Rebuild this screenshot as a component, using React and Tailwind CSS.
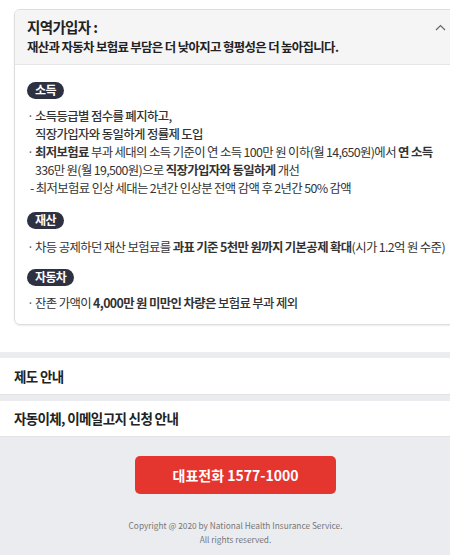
const font = { fontFamily: '"Noto Sans CJK KR", "Noto Sans", sans-serif' };

const Badge = ({ children }) => (
  <span className="inline-flex h-[17px] items-center rounded-full bg-[#2e3142] px-[8px] text-[12px] font-bold leading-none text-white">
    {children}
  </span>
);

const Bullet = ({ children, nowrap }) => (
  <div className="flex">
    <span className="w-[8px] shrink-0 text-[#666]">·</span>
    <div className={nowrap ? 'whitespace-nowrap' : ''}>{children}</div>
  </div>
);

const Chevron = ({ up, className }) => (
  <svg width="11" height="7" viewBox="0 0 11 7" className={className} fill="none">
    <path
      d={up ? 'M1 6L5.5 1.5L10 6' : 'M1 1L5.5 5.5L10 1'}
      stroke="currentColor"
      strokeWidth="1.2"
    />
  </svg>
);

export default function App() {
  return (
    <div className="w-[450px] h-[555px] overflow-hidden bg-[#ebecf0]" style={font}>
      <div className="w-[471px] tracking-[-0.04em] text-[#333]">
        {/* 지역가입자 카드 */}
        <div className="bg-white px-[14px] pt-[9px] pb-[27px]">
          <div className="rounded-[6px] border border-[#dddddf] shadow-[0_1px_2px_rgba(0,0,0,0.08)] overflow-hidden">
            <div className="flex items-start justify-between bg-[#f5f5f5] px-[12px] py-[7px] border-b border-[#e6e6e6]">
              <div className="font-bold text-[#222]">
                <div className="text-[14.5px] leading-[20px]">지역가입자 :</div>
                <div className="text-[12.4px] leading-[20px]">재산과 자동차 보험료 부담은 더 낮아지고 형평성은 더 높아집니다.</div>
              </div>
              <Chevron up className="mt-[7px] mr-[-2px] text-[#666]" />
            </div>
            <div className="px-[12px] pt-[16px] pb-[12px] text-[12.4px] leading-[18px]">
              <Badge>소득</Badge>
              <div className="mt-[8px]">
                <Bullet>
                  <span className="font-medium">소득등급별 점수를 폐지하고,</span>
                  <br />
                  <span className="font-medium">직장가입자와 동일하게 정률제 도입</span>
                </Bullet>
                <Bullet>
                  <span className="font-bold">최저보험료</span> 부과 세대의 소득 기준이 연 소득 100만 원 이하(월 14,650원)에서{' '}
                  <span className="font-bold">연 소득</span>
                  <br />
                  336만 원(월 19,500원)으로 <span className="font-bold">직장가입자와 동일하게</span> 개선
                </Bullet>
                <div className="pl-[3px]">- 최저보험료 인상 세대는 2년간 인상분 전액 감액 후 2년간 50% 감액</div>
              </div>

              <div className="mt-[14px]">
                <Badge>재산</Badge>
              </div>
              <div className="mt-[9px]">
                <Bullet nowrap>
                  차등 공제하던 재산 보험료를 <span className="font-bold">과표 기준 5천만 원까지 기본공제 확대</span>(시가 1.2억 원 수준)
                </Bullet>
              </div>

              <div className="mt-[12px]">
                <Badge>자동차</Badge>
              </div>
              <div className="mt-[8px]">
                <Bullet>
                  잔존 가액이 <span className="font-bold">4,000만 원 미만인 차량은</span>{' '}
                  <span className="font-medium">보험료 부과 제외</span>
                </Bullet>
              </div>
            </div>
          </div>
        </div>

        {/* 접힌 항목 */}
        <div className="mt-[6px] flex h-[37px] items-center justify-between border-b border-[#e2e2e6] bg-white px-[14px]">
          <span className="text-[13.5px] font-bold text-[#222]">제도 안내</span>
          <Chevron className="text-[#bbb] mr-[-4px]" />
        </div>
        <div className="mt-[6px] flex h-[36px] items-center justify-between border-b border-[#e2e2e6] bg-white px-[14px]">
          <span className="text-[13.5px] font-bold text-[#222]">자동이체, 이메일고지 신청 안내</span>
          <Chevron className="text-[#bbb] mr-[-4px]" />
        </div>

        {/* 하단 */}
        <div className="flex flex-col items-center pt-[19px]">
          <button className="flex h-[38px] w-[201px] items-center justify-center rounded-[5px] bg-[#e5352f] text-[14px] font-bold tracking-normal text-white">
            대표전화 1577-1000
          </button>
          <div className="mt-[24px] text-center text-[8.3px] leading-[14px] tracking-normal text-[#777]">
            Copyright @ 2020 by National Health Insurance Service.
            <br />
            All rights reserved.
          </div>
        </div>
      </div>
    </div>
  );
}
